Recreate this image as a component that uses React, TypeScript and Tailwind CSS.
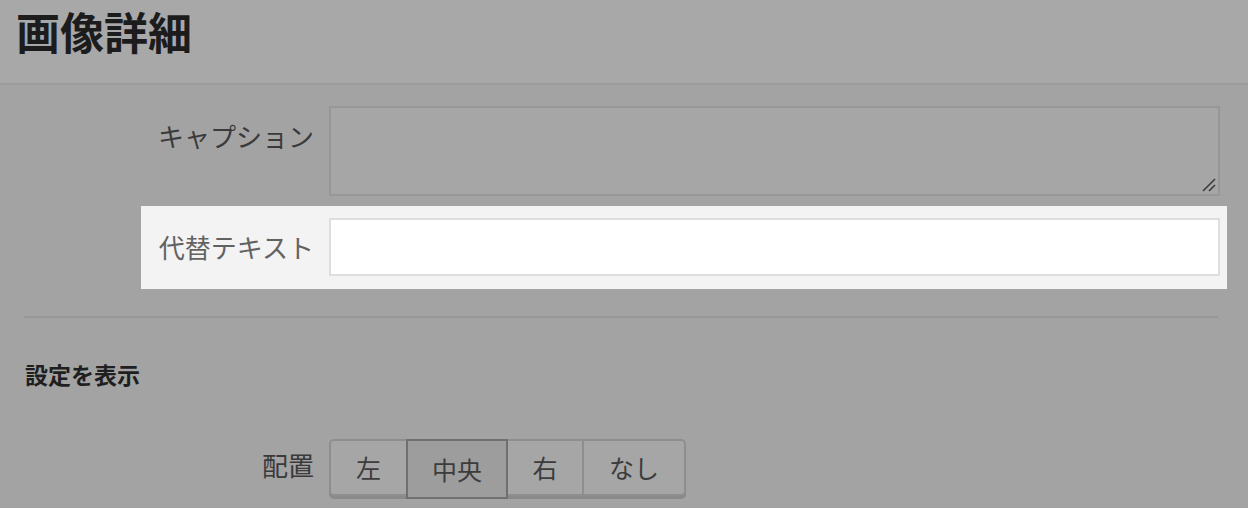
import React from "react";

const font = { fontFamily: '"Noto Sans CJK JP", "Noto Sans", sans-serif' };

export default function App() {
  return (
    <div
      className="w-[1248px] h-[508px] overflow-hidden bg-[#a3a3a3]"
      style={font}
    >
      <div className="h-[85px] bg-[#a8a8a8] border-b-2 border-[#9b9b9b] flex items-start pl-[16px] pt-[1px]">
        <h1 className="text-[44px] font-bold leading-[60px] text-[#1c1c1c]">画像詳細</h1>
      </div>

      <div className="flex pt-[21px]">
        <div className="w-[314px] text-right text-[26px] leading-[36px] text-[#3a3a3a] pt-[12px]">キャプション</div>
        <div className="ml-[15px] w-[891px] h-[90px] border-2 border-[#979797] bg-[#a6a6a6] relative">
          <svg className="absolute right-[2px] bottom-[2px]" width="16" height="16" viewBox="0 0 16 16">
            <line x1="3" y1="15" x2="15" y2="3" stroke="#3a3a3a" strokeWidth="1.6" />
            <line x1="9" y1="15" x2="15" y2="9" stroke="#3a3a3a" strokeWidth="1.6" />
          </svg>
        </div>
      </div>

      <div className="ml-[141px] mt-[10px] w-[1086px] h-[83px] bg-[#f3f3f3] flex items-start pt-[12px]">
        <div className="w-[173px] text-right text-[26px] leading-[36px] text-[#626262] pt-[11px]">代替テキスト</div>
        <div className="ml-[15px] w-[891px] h-[58px] bg-white border-2 border-[#dedede]" />
      </div>

      <div className="ml-[24px] mt-[27px] w-[1194px] h-[2px] bg-[#979797]" />

      <div className="pl-[25px] mt-[40px] text-[23px] font-bold leading-[32px] text-[#1f1f1f]">設定を表示</div>

      <div className="flex mt-[49px]">
        <div className="w-[314px] text-right text-[26px] leading-[36px] text-[#3a3a3a] pt-[8px]">配置</div>
        <div className="ml-[15px] flex items-start h-[60px]">
          <div className="w-[77px] h-[57px] flex items-center justify-center border-2 border-r-0 border-[#8e8e8e] rounded-l-[5px] bg-[#a6a6a6] text-[25px] text-[#3c3c3c] shadow-[0_3px_0_#8a8a8a]">左</div>
          <div className="w-[102px] h-[60px] flex items-center justify-center border-2 border-[#707070] bg-[#9d9d9d] text-[25px] text-[#3c3c3c] pt-[2px]">中央</div>
          <div className="w-[76px] h-[57px] flex items-center justify-center border-2 border-l-0 border-[#8e8e8e] bg-[#a6a6a6] text-[25px] text-[#3c3c3c] shadow-[0_3px_0_#8a8a8a]">右</div>
          <div className="w-[102px] h-[57px] flex items-center justify-center border-2 border-l-0 border-[#8e8e8e] rounded-r-[5px] bg-[#a6a6a6] text-[25px] text-[#3c3c3c] shadow-[0_3px_0_#8a8a8a]">なし</div>
        </div>
      </div>
    </div>
  );
}
